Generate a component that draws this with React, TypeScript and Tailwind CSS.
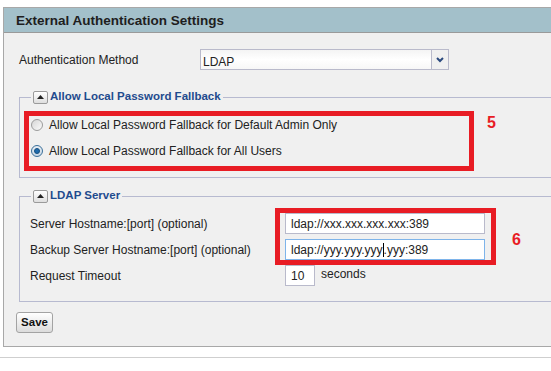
import React from "react";

function ToggleButton() {
  return (
    <span className="flex items-center justify-center w-[15px] h-[13px] rounded-[2px] border border-[#9a9a9a] bg-gradient-to-b from-white to-[#dedede]">
      <svg width="7" height="4" viewBox="0 0 7 4">
        <polygon points="0,4 3.5,0 7,4" fill="#222" />
      </svg>
    </span>
  );
}

function Radio({ checked }: { checked?: boolean }) {
  if (checked) {
    return (
      <span className="flex items-center justify-center w-[12px] h-[12px] rounded-full border border-[#3a6f9a] bg-gradient-to-b from-[#e8eef4] to-[#c7d6e4]">
        <span className="w-[6px] h-[6px] rounded-full bg-[#1f6bad] border border-[#17507f]" />
      </span>
    );
  }
  return (
    <span className="w-[12px] h-[12px] rounded-full border border-[#9c9c9c] bg-gradient-to-br from-[#d6d6d6] to-[#fbfbfb]" />
  );
}

function TextBox({ children, focused, width }: { children: React.ReactNode; focused?: boolean; width: string }) {
  return (
    <div
      className={
        focused
          ? `${width} h-[21px] flex items-center pl-[5px] bg-white border border-[#7eb4ea] whitespace-nowrap`
          : `${width} h-[21px] flex items-center pl-[5px] bg-white border border-[#b9bacb] whitespace-nowrap`
      }
    >
      {children}
    </div>
  );
}

export default function App() {
  return (
    <div className="relative w-[551px] h-[371px] overflow-hidden bg-white font-['Liberation_Sans',Arial,sans-serif] text-[12px] text-[#222]">
      <div className="pt-[7px] pl-[3px]">
        <div className="w-[640px] h-[340px] border border-[#a8a8a8] bg-[#f0f0f0]">
          <div className="h-[25px] flex items-center pt-[2px] pl-[12px] bg-[#a3c0ca] border-b border-[#9a9a9a] font-bold text-[13.5px] text-[#1e1e1e]">
            External Authentication Settings
          </div>

          {/* method row */}
          <div className="mt-[16px] flex items-center">
            <div className="pl-[15px] w-[196px]">Authentication Method</div>
            <div className="w-[249px] h-[21px] flex border border-[#b9bacb] bg-gradient-to-b from-[#f4f4f4] via-white to-[#f7f7f7]">
              <div className="flex-1 flex items-center pt-[4px] pl-[2px]">LDAP</div>
              <div className="w-[17px] flex items-center justify-center border-l border-[#b9bacb] bg-[#f0f0f0]">
                <svg width="8" height="6" viewBox="0 0 8 6">
                  <polyline points="1,1 4,4 7,1" fill="none" stroke="#2b4a7e" strokeWidth="2" />
                </svg>
              </div>
            </div>
          </div>

          {/* fallback */}
          <fieldset className="mt-[20px] ml-[15px] border border-[#b7bad0] pt-[11px] pb-[16px] pl-[11px]">
            <legend className="px-[2px] h-[14px] flex items-center gap-[2px]">
              <ToggleButton />
              <span className="font-bold text-[11.5px] text-[#1f4b8e]">Allow Local Password Fallback</span>
            </legend>
            <div className="flex flex-col gap-[6px]">
              <div className="h-[20px] flex items-center gap-[6px]">
                <Radio />
                <span>Allow Local Password Fallback for Default Admin Only</span>
              </div>
              <div className="h-[20px] flex items-center gap-[6px]">
                <Radio checked />
                <span>Allow Local Password Fallback for All Users</span>
              </div>
            </div>
          </fieldset>

          {/* ldap server */}
          <fieldset className="mt-[11px] ml-[15px] border border-[#b7bad0] pt-[10px] pb-[15px] pl-[10px]">
            <legend className="ml-[1px] px-[2px] h-[14px] flex items-center gap-[2px]">
              <ToggleButton />
              <span className="font-bold text-[11.5px] text-[#1f4b8e]">LDAP Server</span>
            </legend>
            <div className="flex flex-col gap-[5px]">
              <div className="flex items-center">
                <div className="w-[255px]">Server Hostname:[port] (optional)</div>
                <TextBox width="w-[200px]">ldap://xxx.xxx.xxx.xxx:389</TextBox>
              </div>
              <div className="flex items-center">
                <div className="w-[255px]">Backup Server Hostname:[port] (optional)</div>
                <TextBox width="w-[200px]" focused>
                  ldap://yyy.yyy.yyy
                  <span className="inline-block w-px h-[14px] bg-black" />
                  .yyy:389
                </TextBox>
              </div>
              <div className="flex items-center">
                <div className="w-[255px]">Request Timeout</div>
                <TextBox width="w-[30px]">10</TextBox>
                <span className="ml-[6px] -mt-[3px]">seconds</span>
              </div>
            </div>
          </fieldset>

          <button className="mt-[10px] ml-[12px] w-[37px] h-[21px] rounded-[3px] border border-[#a3a3a3] bg-gradient-to-b from-white to-[#dcdcdc] font-bold text-[11.5px] text-[#111]">
            Save
          </button>
        </div>
      </div>
      <div className="mt-[10px] border-t border-[#cfcfcf]" />

      {/* annotation boxes */}
      <div className="absolute left-[24px] top-[111px] w-[450px] h-[60px] border-[5px] border-[#e81c24]" />
      <div className="absolute left-[487px] top-[115px] font-bold text-[16px] leading-none text-[#e81c24]">5</div>
      <div className="absolute left-[275px] top-[208px] w-[221px] h-[57px] border-[5px] border-[#e81c24]" />
      <div className="absolute left-[512px] top-[232px] font-bold text-[16px] leading-none text-[#e81c24]">6</div>
    </div>
  );
}
